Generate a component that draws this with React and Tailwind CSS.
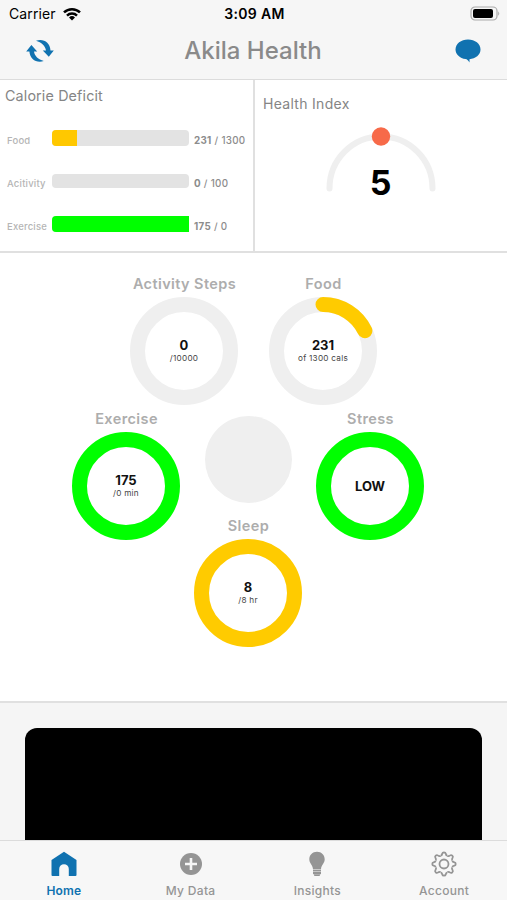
const bars = [
  { label: 'Food', value: '231', goal: '1300', pct: 18, height: 'h-4', color: 'bg-[#ffc800]', fill: 'rounded-l-sm' },
  { label: 'Acitivity', value: '0', goal: '100', pct: 0, height: 'h-3.5', color: 'bg-[#e3e3e3]', fill: '' },
  { label: 'Exercise', value: '175', goal: '0', pct: 100, height: 'h-4', color: 'bg-[#00ff00]', fill: 'rounded-l' },
];

function StatusBar() {
  return (
    <div className="flex h-[27px] items-center justify-between pl-[9px] pr-[7px] text-black">
      <div className="flex w-[150px] items-center gap-[7px]">
        <span className="text-[14px] tracking-[0.1px]">Carrier</span>
        <WifiIcon />
      </div>
      <span className="text-[14px] font-semibold tracking-[0.3px]">3:09 AM</span>
      <div className="flex w-[150px] justify-end">
        <svg width="30" height="15" viewBox="0 0 30 15">
          <rect x="1" y="1" width="26" height="13" rx="4" fill="none" stroke="#aaa" strokeWidth="1.2" />
          <rect x="3" y="3" width="20" height="9" rx="2" fill="#000" />
          <path d="M28.2 5.2q2 2.3 0 4.6z" fill="#aaa" />
        </svg>
      </div>
    </div>
  );
}

function WifiIcon() {
  return (
    <svg width="18" height="14" viewBox="0 0 18 14" fill="none" stroke="#000" strokeWidth="2.5">
      <path d="M1 5.4a11.5 11.5 0 0 1 16 0" />
      <path d="M4 8.6a7.2 7.2 0 0 1 10 0" />
      <path d="M9 13.4 6 10.5a4.3 4.3 0 0 1 6 0z" fill="#000" stroke="none" />
    </svg>
  );
}

function Ring({ label, value, sub, track = '#efefef', color, progress = 0 }) {
  const circ = 2 * Math.PI * 46.5;
  return (
    <div className="flex w-[108px] flex-col items-center">
      <div className="flex h-[25px] items-center whitespace-nowrap pb-px pl-px text-[14.5px] font-semibold tracking-[0.4px] text-[#adadad]">{label}</div>
      <div className="grid size-[108px] place-items-center">
        <svg className="col-start-1 row-start-1" width="108" height="108" viewBox="0 0 108 108" fill="none" strokeWidth="15">
          <circle cx="54" cy="54" r="46.5" stroke={track} />
          {progress > 0 && (
            <circle
              cx="54"
              cy="54"
              r="46.5"
              stroke={color}
              strokeLinecap="round"
              strokeDasharray={`${circ * progress} ${circ}`}
              transform="rotate(-90 54 54)"
            />
          )}
        </svg>
        <div className={`col-start-1 row-start-1 flex flex-col items-center text-[#111] ${sub ? 'pb-px' : ''}`}>
          <span className="text-[13px] font-bold leading-[16px]">{value}</span>
          {sub && <span className="text-[8.2px] leading-[11px] tracking-[0.25px] text-[#444]">{sub}</span>}
        </div>
      </div>
    </div>
  );
}

function Tab({ label, active, children }) {
  return (
    <div className={`flex flex-1 flex-col items-center pl-px pt-[7px] ${active ? 'text-[#1072b0]' : 'text-[#959595]'}`}>
      <div className="flex h-[31px] items-center">{children}</div>
      <span className={`mt-1 text-[12px] leading-[15px] ${active ? 'font-semibold tracking-[0.2px]' : 'font-medium tracking-[0.3px]'}`}>{label}</span>
    </div>
  );
}

export default function App() {
  return (
    <div className="flex h-[900px] w-[507px] flex-col overflow-hidden bg-white font-['Inter',sans-serif]">
      <header className="h-20 border-b border-[#dcdcdc] bg-[#f6f6f6]">
        <StatusBar />
        <div className="flex h-12 items-center justify-between pl-[26px] pr-[26px]">
          <svg width="28" height="24" viewBox="0 0 28 24" fill="#1072b0">
            <path d="M10 1.800C17.500-.6 24 3.500 24.500 11.500H27.800L22.800 17.800 16.800 11.500H20C19.300 7 15.500 3.300 10 1.800z" />
            <path d="M17.800 22C10.500 24.200 4 20.500 3.400 12.500H.2L5.400 6 11.200 12.500H8C8.600 17 12.300 20.500 17.800 22z" />
          </svg>
          <h1 className="pr-[3px] text-[24px] font-medium text-[#8a8a8a]">Akila Health</h1>
          <svg width="26" height="24" viewBox="0 0 26 24" fill="#1072b0">
            <path d="M13 .5C6 .5.5 4.800.5 10.500c0 5 4.500 8.800 10 9.600 1.500.3 2.500 1.300 4 3.400v-3.300c6-.5 11-4.400 11-9.700C25.500 4.800 20 .5 13 .5z" />
          </svg>
        </div>
      </header>

      <section className="flex h-[173px] border-b-2 border-[#e0e0e0]">
        <div className="w-[255px] border-r-2 border-[#e0e0e0] pl-[5px] pt-[6px]">
          <h2 className="text-[14.3px] leading-5 tracking-[0.15px] text-[#858585]">Calorie Deficit</h2>
          <div className="mt-[10px]">
            {bars.map((bar) => (
              <div key={bar.label} className="flex h-[43px] items-center">
                <span className="w-[47px] pl-0.5 pt-2 text-[9.5px] font-medium tracking-[0.2px] text-[#b5b5b5]">{bar.label}</span>
                <div className={`w-[137px] rounded-sm bg-[#e3e3e3] ${bar.height}`}>
                  <div className={`h-full ${bar.color} ${bar.fill}`} style={{ width: `${bar.pct}%` }} />
                </div>
                <span className="whitespace-nowrap pl-[5px] pt-2 text-[9.8px] font-medium tracking-[0.3px] text-[#8c8c8c]">
                  <b>{bar.value}</b> / {bar.goal}
                </span>
              </div>
            ))}
          </div>
        </div>
        <div className="flex-1 pt-[14px]">
          <h2 className="pl-2 text-[14px] leading-5 tracking-[0.3px] text-[#858585]">Health Index</h2>
          <div className="mt-[11px] grid w-[251px] justify-items-center">
            <svg className="col-start-1 row-start-1" width="112" height="70" viewBox="0 0 112 70">
              <path d="M4.500 63.500A51.500 52 0 0 1 107.500 63.500" fill="none" stroke="#efefef" strokeWidth="6" strokeLinecap="round" />
              <circle cx="56" cy="11.500" r="9.200" fill="#f76a49" />
            </svg>
            <span className="col-start-1 row-start-1 mt-[38px] text-[34px] font-bold leading-10 text-black">5</span>
          </div>
        </div>
      </section>

      <section className="h-[448px] pt-[19px]">
        <div className="flex gap-[31px] pl-[130px]">
          <Ring label="Activity Steps" value="0" sub="/10000" />
          <Ring label="Food" value="231" sub="of 1300 cals" color="#ffcb00" progress={0.178} />
        </div>
        <div className="mt-[2px] flex gap-[14px] pl-[72px]">
          <Ring label="Exercise" value="175" sub="/0 min" track="#00ff00" />
          <div className="flex flex-col items-center gap-[11px] pt-[9px]">
            <div className="size-[87px] rounded-full bg-[#efefef]" />
            <Ring label="Sleep" value="8" sub="/8 hr" track="#ffcb00" />
          </div>
          <Ring label="Stress" value="LOW" track="#00ff00" />
        </div>
      </section>

      <section className="h-[139px] border-t-2 border-[#e0e0e0] bg-[#f5f5f5] px-[25px] pt-[25px]">
        <div className="h-full rounded-t-xl bg-black" />
      </section>

      <nav className="flex h-[60px] border-t border-[#dcdcdc] bg-[#f7f7f7]">
        <Tab label="Home" active>
          <svg width="26" height="26" viewBox="0 0 26 26" fill="currentColor">
            <path d="M13 .8 25.500 9V24q0 1-1 1H17.800V18a4.800 4.800 0 0 0-9.600 0v7H1.500q-1 0-1-1V9z" />
          </svg>
        </Tab>
        <Tab label="My Data">
          <svg width="24" height="24" viewBox="0 0 24 24">
            <circle cx="12" cy="12" r="11" fill="currentColor" />
            <path d="M12 6v12M6 12h12" stroke="#f7f7f7" strokeWidth="2.600" />
          </svg>
        </Tab>
        <Tab label="Insights">
          <svg width="18" height="26" viewBox="0 0 18 26" fill="currentColor">
            <path d="M9 .8C4.500.8 1.300 4.100 1.300 8.200c0 4 3.500 5.800 3.700 10h8c.2-4.200 3.700-6 3.700-10C16.700 4.100 13.500.8 9 .8z" />
            <path d="M5 18.700h8v1.900H5zM5 21h8v1.900H5zM5.500 23.300h7L11.500 25h-5z" />
          </svg>
        </Tab>
        <Tab label="Account">
          <GearIcon />
        </Tab>
      </nav>
    </div>
  );
}

function GearIcon() {
  return (
    <svg width="26" height="26" viewBox="0 0 26 26" fill="none" stroke="currentColor" strokeWidth="1.800" strokeLinejoin="round">
      {/* one tooth every 45 degrees */}
      {[0, 45, 90, 135, 180, 225, 270, 315].map((a) => (
        <path key={a} d="M9.600 4.700Q11 4.500 11.300 2.500Q11.500 1.300 13 1.300Q14.500 1.300 14.700 2.500Q15 4.500 16.400 4.700" transform={`rotate(${a} 13 13)`} />
      ))}
      <circle cx="13" cy="13" r="4.500" />
    </svg>
  );
}
